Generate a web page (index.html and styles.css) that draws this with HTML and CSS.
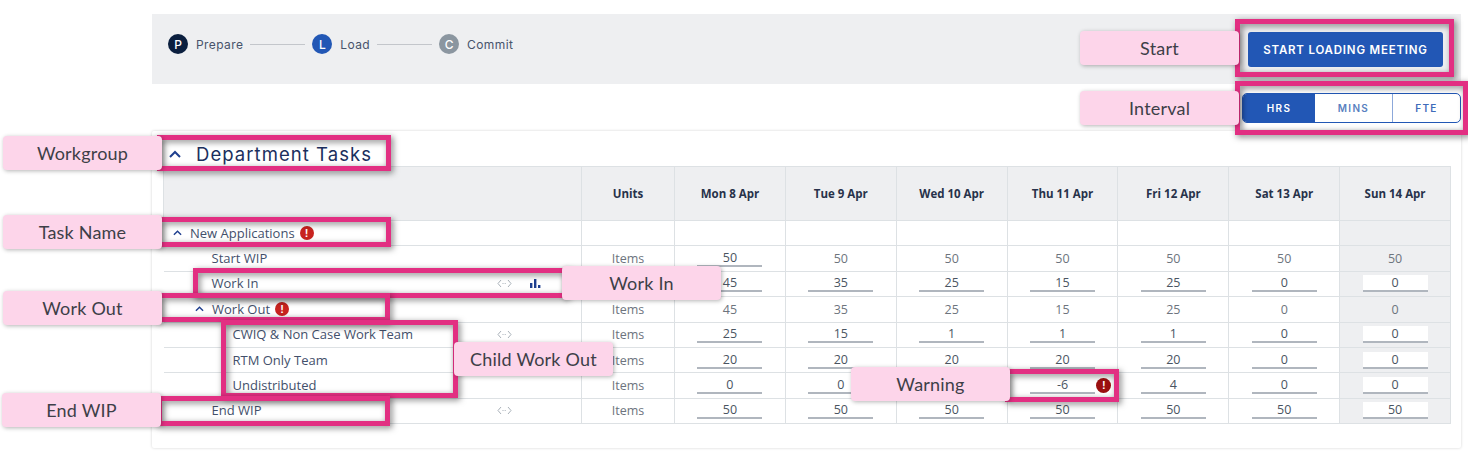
FILE: index.html

```html
<!DOCTYPE html>
<html lang="en">
<head>
    <meta charset="UTF-8">
    <meta name="viewport" content="width=device-width, initial-scale=1.0">
    <title>Department Tasks</title>
    <link rel="stylesheet" href="styles.css">
</head>
<body>
    <div class="top-bar">
        <div class="stepper">
            <span class="step-dot dot-prepare">P</span><span class="step-name">Prepare</span><span class="step-line"></span>
            <span class="step-dot dot-load">L</span><span class="step-name">Load</span><span class="step-line"></span>
            <span class="step-dot dot-commit">C</span><span class="step-name">Commit</span>
        </div>
        <button class="start-btn">START LOADING MEETING</button>
    </div>

    <div class="interval-row">
        <div class="interval">
            <span class="interval-opt interval-on">HRS</span>
            <span class="interval-opt interval-mins">MINS</span>
            <span class="interval-opt interval-fte">FTE</span>
        </div>
    </div>

    <div class="card">
        <h2 class="group-title">
            <svg class="chev-lg" viewBox="0 0 12 8"><polyline points="1,7 6,2 11,7"/></svg>
            Department Tasks
        </h2>
        <table class="tasks">
            <colgroup>
                <col class="col-name"><col class="col-units">
                <col class="col-day"><col class="col-day"><col class="col-day"><col class="col-day"><col class="col-day"><col class="col-day"><col class="col-day">
            </colgroup>
            <thead>
                <tr>
                    <th></th><th>Units</th>
                    <th>Mon 8 Apr</th><th>Tue 9 Apr</th><th>Wed 10 Apr</th><th>Thu 11 Apr</th><th>Fri 12 Apr</th><th>Sat 13 Apr</th><th class="off-day">Sun 14 Apr</th>
                </tr>
            </thead>
            <tbody>
                <tr>
                    <td class="name">
                        <div class="name-in lvl-0">
                            <svg class="chev" viewBox="0 0 10 6"><polyline points="1,5 5,1 9,5"/></svg>
                            <span>New Applications</span><span class="warn">!</span>
                        </div>
                    </td>
                    <td></td><td></td><td></td><td></td><td></td><td></td><td></td><td class="off-day"></td>
                </tr>
                <tr>
                    <td class="name"><div class="name-in lvl-1"><span>Start WIP</span></div></td>
                    <td>Items</td>
                    <td><span class="cell-input">50</span></td><td>50</td><td>50</td><td>50</td><td>50</td><td>50</td><td class="off-day">50</td>
                </tr>
                <tr>
                    <td class="name">
                        <div class="name-in lvl-1">
                            <span>Work In</span>
                            <span class="row-icons">
                                <svg class="code-icon" viewBox="0 0 15 9"><polyline points="4,1 1,4.5 4,8"/><polyline points="11,1 14,4.5 11,8"/><line x1="5.5" y1="4.5" x2="9.8" y2="4.5" stroke-dasharray="1 1.2"/></svg>
                                <svg class="bars-icon" viewBox="0 0 11 9"><rect x="0" y="4" width="2.4" height="5"/><rect x="4" y="0" width="2.4" height="9"/><rect x="8" y="6" width="2.4" height="3"/></svg>
                            </span>
                        </div>
                    </td>
                    <td>Items</td>
                    <td><span class="cell-input">45</span></td><td><span class="cell-input">35</span></td><td><span class="cell-input">25</span></td><td><span class="cell-input">15</span></td><td><span class="cell-input">25</span></td><td><span class="cell-input">0</span></td><td class="off-day"><span class="cell-input">0</span></td>
                </tr>
                <tr>
                    <td class="name">
                        <div class="name-in lvl-1b">
                            <svg class="chev" viewBox="0 0 10 6"><polyline points="1,5 5,1 9,5"/></svg>
                            <span>Work Out</span><span class="warn">!</span>
                        </div>
                    </td>
                    <td>Items</td>
                    <td>45</td><td>35</td><td>25</td><td>15</td><td>25</td><td>0</td><td class="off-day">0</td>
                </tr>
                <tr>
                    <td class="name">
                        <div class="name-in lvl-2">
                            <span>CWIQ &amp; Non Case Work Team</span>
                            <span class="row-icons">
                                <svg class="code-icon" viewBox="0 0 15 9"><polyline points="4,1 1,4.5 4,8"/><polyline points="11,1 14,4.5 11,8"/><line x1="5.5" y1="4.5" x2="9.8" y2="4.5" stroke-dasharray="1 1.2"/></svg>
                            </span>
                        </div>
                    </td>
                    <td>Items</td>
                    <td><span class="cell-input">25</span></td><td><span class="cell-input">15</span></td><td><span class="cell-input">1</span></td><td><span class="cell-input">1</span></td><td><span class="cell-input">1</span></td><td><span class="cell-input">0</span></td><td class="off-day"><span class="cell-input">0</span></td>
                </tr>
                <tr>
                    <td class="name"><div class="name-in lvl-2"><span>RTM Only Team</span></div></td>
                    <td>Items</td>
                    <td><span class="cell-input">20</span></td><td><span class="cell-input">20</span></td><td><span class="cell-input">20</span></td><td><span class="cell-input">20</span></td><td><span class="cell-input">20</span></td><td><span class="cell-input">0</span></td><td class="off-day"><span class="cell-input">0</span></td>
                </tr>
                <tr>
                    <td class="name"><div class="name-in lvl-2"><span>Undistributed</span></div></td>
                    <td>Items</td>
                    <td><span class="cell-input">0</span></td><td><span class="cell-input">0</span></td><td><span class="cell-input">4</span></td>
                    <td class="warn-cell"><span class="cell-input">-6</span><span class="warn warn-dark">!</span></td>
                    <td><span class="cell-input">4</span></td><td><span class="cell-input">0</span></td><td class="off-day"><span class="cell-input">0</span></td>
                </tr>
                <tr>
                    <td class="name">
                        <div class="name-in lvl-1">
                            <span>End WIP</span>
                            <span class="row-icons">
                                <svg class="code-icon" viewBox="0 0 15 9"><polyline points="4,1 1,4.5 4,8"/><polyline points="11,1 14,4.5 11,8"/><line x1="5.5" y1="4.5" x2="9.8" y2="4.5" stroke-dasharray="1 1.2"/></svg>
                            </span>
                        </div>
                    </td>
                    <td>Items</td>
                    <td><span class="cell-input">50</span></td><td><span class="cell-input">50</span></td><td><span class="cell-input">50</span></td><td><span class="cell-input">50</span></td><td><span class="cell-input">50</span></td><td><span class="cell-input">50</span></td><td class="off-day"><span class="cell-input">50</span></td>
                </tr>
            </tbody>
        </table>
    </div>

    <!-- annotation boxes and labels over the page -->
    <div class="mark mark-start"></div>
    <div class="mark mark-interval"></div>
    <div class="mark mark-group"></div>
    <div class="mark mark-task"></div>
    <div class="mark mark-workin"></div>
    <div class="mark mark-workout"></div>
    <div class="mark mark-child"></div>
    <div class="mark mark-endwip"></div>
    <div class="mark mark-warning"></div>

    <div class="tag tag-start">Start</div>
    <div class="tag tag-interval">Interval</div>
    <div class="tag tag-group">Workgroup</div>
    <div class="tag tag-task">Task Name</div>
    <div class="tag tag-workin">Work In</div>
    <div class="tag tag-workout">Work Out</div>
    <div class="tag tag-child">Child Work Out</div>
    <div class="tag tag-endwip">End WIP</div>
    <div class="tag tag-warning">Warning</div>
</body>
</html>
```

FILE: styles.css

```css
body {
    margin: 0;
    padding: 14px 7px 0 152px;
    position: relative;
    height: 439px;
    overflow: hidden;
    background-color: #fff;
    font-family: 'Open Sans', sans-serif;
    color: #6d747d;
}

/* top bar */
.top-bar {
    height: 70px;
    box-sizing: border-box;
    background-color: #eeeff1;
    display: flex;
    justify-content: space-between;
    align-items: flex-start;
    padding: 18px 18px 0 16px;
}
.stepper {
    display: flex;
    align-items: center;
    height: 24px;
    font-family: 'Inter', sans-serif;
}
.step-dot {
    width: 20px;
    height: 20px;
    border-radius: 50%;
    color: #fff;
    font-size: 12px;
    font-weight: 500;
    display: flex;
    align-items: center;
    justify-content: center;
}
.dot-prepare { background-color: #0b1f3f; }
.dot-load { background-color: #2257b5; }
.dot-commit { background-color: #8b96a0; }
.step-name {
    margin-left: 8px;
    font-size: 12px;
    letter-spacing: 0.4px;
    color: #47536b;
}
.step-line {
    width: 55px;
    height: 1px;
    margin: 0 7px;
    background-color: #c3c6cb;
}
.start-btn {
    width: 195px;
    height: 35px;
    border: none;
    border-radius: 3px;
    background-color: #2257b5;
    color: #fff;
    font-family: 'Inter', sans-serif;
    font-size: 11.5px;
    font-weight: 600;
    letter-spacing: 0.8px;
}

/* interval */
.interval-row {
    height: 47px;
    box-sizing: border-box;
    padding-top: 9px;
    display: flex;
    justify-content: flex-end;
}
.interval {
    width: 219px;
    height: 30px;
    box-sizing: border-box;
    border: 1px solid #2257b5;
    border-radius: 5px;
    overflow: hidden;
    display: flex;
    font-family: 'Inter', sans-serif;
    font-size: 10px;
    font-weight: 600;
    letter-spacing: 1.3px;
    color: #3f6cba;
}
.interval-opt {
    display: flex;
    align-items: center;
    justify-content: center;
}
.interval-on { width: 72px; background-color: #2257b5; color: #fff; }
.interval-mins { width: 78px; border-right: 1px solid #8ca8da; box-sizing: border-box; color: #5a7fc0; }
.interval-fte { flex: 1; }

/* card */
.card {
    height: 317px;
    box-sizing: border-box;
    padding: 0 11px;
    background-color: #fff;
    box-shadow: 0 0 3px rgba(0, 0, 0, 0.18);
    border-radius: 2px;
}
.group-title {
    margin: 0;
    height: 35px;
    box-sizing: border-box;
    display: flex;
    align-items: center;
    padding: 11px 0 0 6px;
    font-family: 'Inter', sans-serif;
    font-size: 18.5px;
    font-weight: 400;
    letter-spacing: 1.05px;
    color: #1b2f5e;
}
.chev-lg {
    width: 12px;
    height: 8px;
    margin-right: 15px;
    fill: none;
    stroke: #1f3f8f;
    stroke-width: 2;
}

/* table */
.tasks {
    width: 1287px;
    table-layout: fixed;
    border-collapse: collapse;
    font-size: 12.5px;
}
.col-name { width: 418px; }
.col-units { width: 93px; }
.col-day { width: 110.86px; }
.tasks th, .tasks td {
    border: 1px solid #dde1e4;
    padding: 0;
    text-align: center;
}
.tasks th {
    height: 53px;
    background-color: #eeeff1;
    font-size: 11.5px;
    font-weight: 700;
    color: #27324a;
}
.tasks td {
    height: 24.4px;
    line-height: 15px;
}
.tasks td.name {
    border-left: none;
    text-align: left;
    font-size: 13px;
    color: #43506b;
}
.tasks td.off-day, .tasks th.off-day { background-color: #eeeff1; }
.name-in {
    display: flex;
    align-items: center;
    position: relative;
}
.lvl-0 { padding-left: 9px; }
.lvl-1 { padding-left: 48px; }
.lvl-1b { padding-left: 31px; }
.lvl-2 { padding-left: 69px; }
.chev {
    width: 9px;
    height: 6px;
    margin-right: 8.5px;
    fill: none;
    stroke: #1f3f8f;
    stroke-width: 1.6;
}
.warn {
    width: 14px;
    height: 14px;
    margin-left: 5px;
    border-radius: 50%;
    background-color: #c8231f;
    color: #fff;
    font-family: 'Liberation Sans', sans-serif;
    font-size: 11px;
    font-weight: 700;
    line-height: 14px;
    text-align: center;
    display: inline-block;
}
.warn-dark {
    position: absolute;
    right: 6px;
    top: 5px;
    margin: 0;
    width: 15px;
    height: 15px;
    line-height: 15px;
    background-color: #9b1010;
}
.warn-cell { position: relative; }
.row-icons {
    position: absolute;
    left: 333px;
    top: 0;
    display: flex;
    align-items: center;
    height: 15px;
}
.code-icon {
    width: 15px;
    height: 9px;
    fill: none;
    stroke: #a9b1b9;
    stroke-width: 1;
}
.bars-icon {
    width: 11px;
    height: 9px;
    margin-left: 18px;
    fill: #1f3f8f;
}
.cell-input {
    display: block;
    box-sizing: border-box;
    width: 65px;
    height: 17px;
    margin: 0 auto;
    border-bottom: 2px solid #b0b6be;
    line-height: 16px;
    color: #4a5461;
}
.off-day .cell-input { background-color: #fff; }

/* annotations */
.mark {
    position: absolute;
    box-sizing: border-box;
    border: 5px solid #e22f82;
    filter: drop-shadow(2px 2px 3px rgba(0, 0, 0, 0.5));
}
.mark-start { left: 1235px; top: 19px; width: 219px; height: 58px; }
.mark-interval { left: 1235px; top: 81px; width: 233px; height: 54px; }
.mark-group { left: 157px; top: 135px; width: 234px; height: 36px; }
.mark-task { left: 157px; top: 217px; width: 234px; height: 30px; }
.mark-workin { left: 193px; top: 268px; width: 375px; height: 30px; }
.mark-workout { left: 157px; top: 293px; width: 233px; height: 29px; }
.mark-child { left: 221px; top: 320px; width: 237px; height: 78px; }
.mark-endwip { left: 157px; top: 396px; width: 233px; height: 30px; }
.mark-warning { left: 1005px; top: 369px; width: 114px; height: 33px; }

.tag {
    position: absolute;
    width: 159px;
    height: 34px;
    border-radius: 4px;
    background-color: #fdd5ea;
    box-shadow: 1px 1px 4px rgba(0, 0, 0, 0.3);
    display: flex;
    align-items: center;
    justify-content: center;
    font-family: 'Lato', sans-serif;
    font-size: 18px;
    letter-spacing: 0.2px;
    color: #3d3f48;
}
.tag-start { left: 1080px; top: 31px; }
.tag-interval { left: 1080px; top: 91px; }
.tag-group { left: 3px; top: 136px; }
.tag-task { left: 3px; top: 215px; }
.tag-workin { left: 562px; top: 266px; }
.tag-workout { left: 3px; top: 291px; }
.tag-child { left: 454px; top: 342px; }
.tag-endwip { left: 2px; top: 393px; }
.tag-warning { left: 851px; top: 367px; }
```
